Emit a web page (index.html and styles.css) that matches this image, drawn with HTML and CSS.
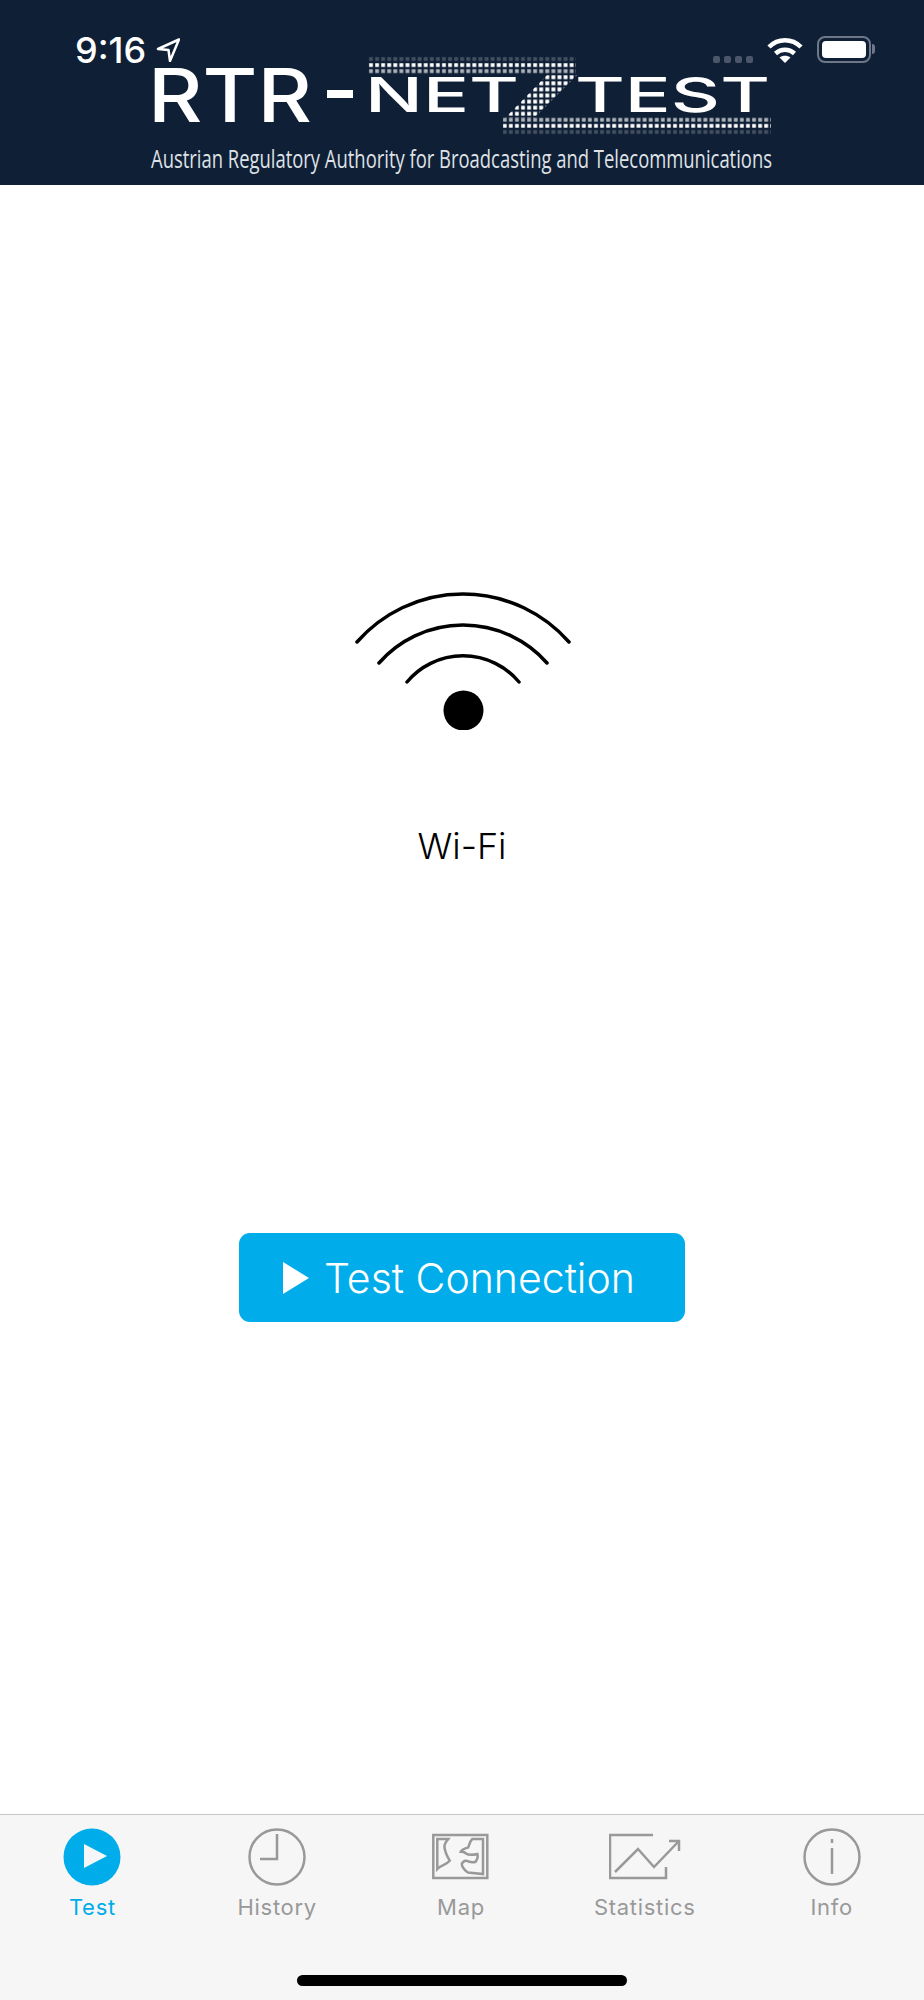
FILE: index.html
```html
<!DOCTYPE html>
<html lang="en">
<head>
    <meta charset="utf-8" />
    <title>RTR-NetzTest</title>
    <link rel="stylesheet" href="styles.css">
</head>
<body>
    <div class="header">
        <svg class="logo" width="924" height="185" viewBox="0 0 924 185">
            <defs>
                <pattern id="dots" patternUnits="userSpaceOnUse" x="368" y="56" width="6.08" height="6.08">
                    <rect x="1.1" y="1.1" width="3.8" height="3.8" fill="#fff"></rect>
                </pattern>
            </defs>
            <rect class="dots_faint" x="368" y="56" width="208" height="6" fill="url(#dots)"></rect>
            <rect x="368" y="62" width="208" height="6" fill="url(#dots)"></rect>
            <rect class="dots_mid" x="368" y="68" width="208" height="6" fill="url(#dots)"></rect>
            <polygon points="548,74 578,74 534,118 505,118" fill="url(#dots)"></polygon>
            <rect class="dots_mid" x="503" y="117" width="268" height="6" fill="url(#dots)"></rect>
            <rect x="503" y="123" width="268" height="6" fill="url(#dots)"></rect>
            <rect class="dots_faint" x="503" y="129" width="268" height="6" fill="url(#dots)"></rect>
            <text class="logo_big" x="148" y="122" textLength="164" lengthAdjust="spacingAndGlyphs">RTR</text>
            <rect class="logo_dash" x="327" y="90" width="26" height="8"></rect>
            <text class="logo_small" x="365" y="112" textLength="154" lengthAdjust="spacingAndGlyphs">NET</text>
            <text class="logo_small" x="575" y="112" textLength="195" lengthAdjust="spacingAndGlyphs">TEST</text>
            <text class="logo_tag" transform="translate(151 168) scale(1 1.15)" textLength="621" lengthAdjust="spacingAndGlyphs">Austrian Regulatory Authority for Broadcasting and Telecommunications</text>
        </svg>
        <div class="status_left">
            <span class="time">9:16</span>
            <svg width="24" height="24" viewBox="0 0 24 24">
                <path class="status_arrow" d="M23 1.500 L2 11 L12.500 12 L14 23 Z"></path>
            </svg>
        </div>
        <div class="status_right">
            <div class="signal"><i></i><i></i><i></i><i></i></div>
            <svg width="36" height="28" viewBox="0 0 36 28">
                <path class="status_wifi" d="M2 11 C11 2 25 2 34 11"></path>
                <path class="status_wifi" d="M8.5 17.5 C14 12.5 22 12.5 27.500 17.500"></path>
                <path class="status_dot" d="M18 27 L12.500 21.500 C15.500 19 20.500 19 23.500 21.500 Z"></path>
            </svg>
            <div class="battery"><div class="battery_level"></div></div>
        </div>
    </div>

    <div class="main">
        <svg class="wifi" width="220" height="140" viewBox="0 0 220 140">
            <path d="M5 52 A141 141 0 0 1 217 52"></path>
            <path d="M27 73 A112 112 0 0 1 195 73"></path>
            <path d="M55 92 A73 73 0 0 1 167 92"></path>
            <circle cx="111.500" cy="120.500" r="20"></circle>
        </svg>
        <div class="network_name">Wi-Fi</div>
        <a class="start_button">
            <svg width="26" height="32" viewBox="0 0 26 32"><polygon points="0,0 26,16 0,32"></polygon></svg>
            <span>Test Connection</span>
        </a>
    </div>

    <div class="tabbar">
        <ul class="tabs">
            <li class="active">
                <svg width="60" height="60" viewBox="0 0 60 60">
                    <circle class="play_circle" cx="30" cy="30" r="28.500"></circle>
                    <polygon class="play_arrow" points="22,17 45,29 22,41"></polygon>
                </svg>
                <span>Test</span>
            </li>
            <li>
                <svg width="60" height="60" viewBox="0 0 60 60">
                    <circle cx="30" cy="30" r="27.500"></circle>
                    <path d="M30 7 V32 H13"></path>
                </svg>
                <span>History</span>
            </li>
            <li class="tab_map">
                <svg width="60" height="60" viewBox="0 0 60 60">
                    <rect x="2.300" y="8" width="54" height="43"></rect>
                    <path d="M6.300 12 H17.300 C15 15 13 17 13.500 20.300 C14 25 16 29 18.700 33.700 C15 38 10 38 6.300 42 Z"></path>
                    <path d="M41.300 12 H52 V47 L37 45.500 C34 44 31 40 30.700 37 C32 34.500 33 33.500 35 33.700 C38 35 41 36 44.700 34.700 C46.500 32 47 29 46.300 27 C42 28 37 28 35 26.500 C33 24.500 31 25 29.700 24.700 C31 22 36 21 37.300 20.300 C38.500 17 39 14 41.300 12 Z"></path>
                </svg>
                <span>Map</span>
            </li>
            <li class="tab_stats">
                <svg width="72" height="60" viewBox="0 0 72 60">
                    <path d="M44 8 H1 V51 H57 V40"></path>
                    <path d="M6 45 L29 22 L45 40 L70 14"></path>
                    <path d="M60 14 H70 V24"></path>
                </svg>
                <span>Statistics</span>
            </li>
            <li>
                <svg width="60" height="60" viewBox="0 0 60 60">
                    <circle cx="30" cy="30" r="27.500"></circle>
                    <path d="M30 12 V16"></path>
                    <path d="M30 21 V47"></path>
                </svg>
                <span>Info</span>
            </li>
        </ul>
        <div class="home_bar"></div>
    </div>
</body>
</html>
```

FILE: styles.css
```css
html, body {
    margin: 0;
    padding: 0;
    background-color: #fff;
    font-family: Inter, "Liberation Sans", sans-serif;
}

body {
    width: 924px;
    height: 2000px;
    display: flex;
    flex-direction: column;
    overflow: hidden;
}

/******header*****/
.header {
    position: relative;
    height: 185px;
    background-color: #0f1f36;
}

.logo {
    display: block;
}

.logo_big {
    font-family: Inter, sans-serif;
    font-size: 74px;
    font-weight: 500;
    fill: #fff;
}

.logo_small {
    font-family: Inter, sans-serif;
    font-size: 48px;
    font-weight: 500;
    fill: #fff;
}

.logo_dash {
    fill: #fff;
}

.logo_tag {
    font-family: "Open Sans", sans-serif;
    font-size: 22px;
    fill: #dfe2e6;
}

.dots_faint {
    opacity: 0.22;
}

.dots_mid {
    opacity: 0.65;
}

.status_left {
    position: absolute;
    left: 75px;
    top: 29px;
    display: flex;
    align-items: center;
    gap: 10px;
    color: #fff;
}

.time {
    font-size: 36px;
    font-weight: 500;
    line-height: 42px;
}

.status_arrow {
    fill: none;
    stroke: #fff;
    stroke-width: 2.500;
    stroke-linejoin: round;
}

.status_right {
    position: absolute;
    left: 713px;
    top: 36px;
    display: flex;
    align-items: flex-start;
}

.signal {
    display: flex;
    gap: 4px;
    margin-top: 20px;
    margin-right: 14px;
}

    .signal i {
        width: 7px;
        height: 7px;
        border-radius: 2px;
        background-color: #4b566a;
    }

.status_wifi {
    fill: none;
    stroke: #fff;
    stroke-width: 4.500;
}

.status_dot {
    fill: #fff;
}

.battery {
    position: relative;
    box-sizing: border-box;
    width: 54px;
    height: 27px;
    margin-left: 14px;
    padding: 3px;
    border: 2px solid #6d7787;
    border-radius: 8px;
}

    .battery:after {
        content: "";
        position: absolute;
        left: 53px;
        top: 6px;
        width: 3px;
        height: 10px;
        border-radius: 0 3px 3px 0;
        background-color: #6d7787;
    }

.battery_level {
    height: 100%;
    border-radius: 4px;
    background-color: #fff;
}

/******main*****/
.main {
    flex: 1;
    display: flex;
    flex-direction: column;
    align-items: center;
    padding-top: 405px;
}

.wifi {
    display: block;
}

    .wifi path {
        fill: none;
        stroke: #000;
        stroke-width: 3.500;
        stroke-linecap: round;
    }

.network_name {
    margin-top: 94px;
    font-size: 36px;
    font-weight: 350;
    line-height: 44px;
    color: #000;
}

.start_button {
    box-sizing: border-box;
    display: flex;
    align-items: center;
    gap: 15px;
    width: 446px;
    height: 89px;
    margin-top: 365px;
    padding-left: 44px;
    border-radius: 11px;
    background-color: #00adea;
    color: #fff;
    font-size: 41px;
    font-weight: 300;
}

    .start_button svg {
        fill: #fff;
    }

/******tabs*****/
.tabbar {
    height: 185px;
    border-top: 1px solid #c6c6c6;
    background-color: #f6f6f6;
}

.tabs {
    display: flex;
    margin: 0;
    padding: 12px 0 0 0;
}

    .tabs li {
        box-sizing: border-box;
        width: 20%;
        display: flex;
        flex-direction: column;
        align-items: center;
        list-style: none;
        color: #999;
        font-size: 22px;
        line-height: 26px;
        letter-spacing: 0.7px;
    }

        .tabs li span {
            margin-top: 7px;
        }

        .tabs li svg {
            display: block;
            fill: none;
            stroke: #999;
            stroke-width: 2.500;
        }

        .tabs li.active {
            color: #00adea;
        }

        .tabs li.tab_map {
            padding-right: 2px;
        }

        .tabs li.tab_stats {
            padding-right: 4px;
        }

.play_circle {
    fill: #00adea;
    stroke: none;
}

.play_arrow {
    fill: #f4f6f7;
    stroke: none;
}

.home_bar {
    width: 330px;
    height: 11px;
    margin: 55px auto 0 auto;
    border-radius: 6px;
    background-color: #000;
}
```
